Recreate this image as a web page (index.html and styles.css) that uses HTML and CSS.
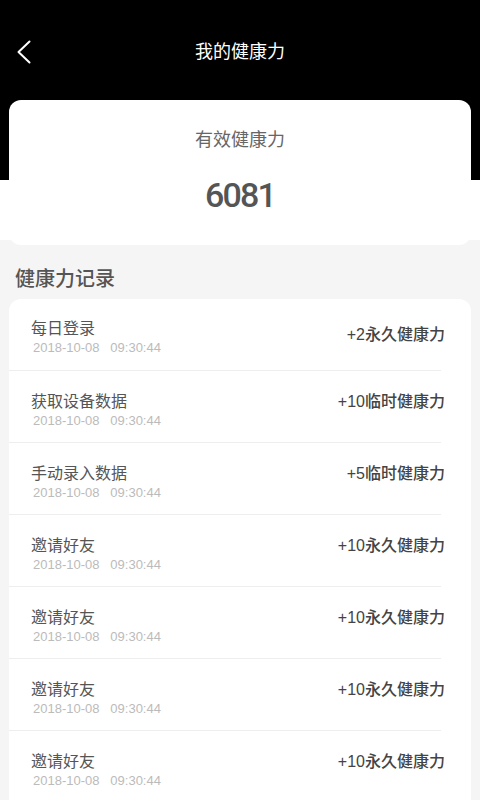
FILE: index.html
```html
<!DOCTYPE html>
<html lang="zh-CN">
<head>
    <meta charset="UTF-8">
    <meta name="viewport" content="width=device-width, initial-scale=1.0">
    <title>我的健康力</title>
    <link rel="stylesheet" href="styles.css">
</head>
<body>
    <div class="hero">
        <div class="nav">
            <span class="back">
                <svg width="14" height="24" viewBox="0 0 14 24">
                    <polyline points="12.5,1.5 1.5,12 12.5,22.5" fill="none" stroke="#fff" stroke-width="2" stroke-linecap="round" stroke-linejoin="round"/>
                </svg>
            </span>
            <span class="nav-title">我的健康力</span>
            <span></span>
        </div>
        <div class="summary">
            <div class="summary-label">有效健康力</div>
            <div class="summary-value">6081</div>
        </div>
    </div>

    <h2 class="section-title">健康力记录</h2>

    <div class="records">
        <div class="record">
            <div class="record-info">
                <div class="record-name">每日登录</div>
                <div class="record-time">2018-10-08&nbsp;&nbsp;&nbsp;09:30:44</div>
            </div>
            <div class="record-points">+2永久健康力</div>
        </div>
        <div class="record">
            <div class="record-info">
                <div class="record-name">获取设备数据</div>
                <div class="record-time">2018-10-08&nbsp;&nbsp;&nbsp;09:30:44</div>
            </div>
            <div class="record-points">+10临时健康力</div>
        </div>
        <div class="record">
            <div class="record-info">
                <div class="record-name">手动录入数据</div>
                <div class="record-time">2018-10-08&nbsp;&nbsp;&nbsp;09:30:44</div>
            </div>
            <div class="record-points">+5临时健康力</div>
        </div>
        <div class="record">
            <div class="record-info">
                <div class="record-name">邀请好友</div>
                <div class="record-time">2018-10-08&nbsp;&nbsp;&nbsp;09:30:44</div>
            </div>
            <div class="record-points">+10永久健康力</div>
        </div>
        <div class="record">
            <div class="record-info">
                <div class="record-name">邀请好友</div>
                <div class="record-time">2018-10-08&nbsp;&nbsp;&nbsp;09:30:44</div>
            </div>
            <div class="record-points">+10永久健康力</div>
        </div>
        <div class="record">
            <div class="record-info">
                <div class="record-name">邀请好友</div>
                <div class="record-time">2018-10-08&nbsp;&nbsp;&nbsp;09:30:44</div>
            </div>
            <div class="record-points">+10永久健康力</div>
        </div>
        <div class="record">
            <div class="record-info">
                <div class="record-name">邀请好友</div>
                <div class="record-time">2018-10-08&nbsp;&nbsp;&nbsp;09:30:44</div>
            </div>
            <div class="record-points">+10永久健康力</div>
        </div>
    </div>
</body>
</html>
```

FILE: styles.css
```css
body {
    margin: 0;
    background: #f5f5f5;
    font-family: "Liberation Sans", "Noto Sans CJK SC", sans-serif;
    color: #555;
}

.hero {
    background: linear-gradient(#000 0, #000 180px, #fff 180px, #fff 240px, transparent 240px);
}

.nav {
    height: 100px;
    display: grid;
    grid-template-columns: 1fr auto 1fr;
    align-items: center;
}

.back {
    padding-left: 17px;
    padding-top: 3px;
    display: flex;
}

.nav-title {
    color: #fff;
    font-size: 18px;
}

.summary {
    margin: 0 9px;
    height: 145px;
    box-sizing: border-box;
    padding-top: 27px;
    background: #fff;
    border-radius: 12px;
    text-align: center;
}

.summary-label {
    font-size: 18px;
    line-height: 26px;
    color: #666;
}

.summary-value {
    margin-top: 21px;
    font-family: Roboto, sans-serif;
    font-size: 34px;
    font-weight: 500;
    line-height: 42px;
    letter-spacing: -1.8px;
    color: #555;
}

.section-title {
    margin: 20px 0 6px 15px;
    font-size: 20px;
    font-weight: 500;
    line-height: 28px;
    color: #555;
}

.records {
    margin: 0 9px;
    background: #fff;
    border-radius: 12px 12px 0 0;
}

.record {
    height: 72px;
    box-sizing: border-box;
    padding: 21px 26px 0 22px;
    display: flex;
    justify-content: space-between;
    align-items: flex-start;
    background: linear-gradient(#eee, #eee) left bottom / calc(100% - 30px) 1px no-repeat;
}

.record:first-child {
    padding-top: 20px;
}

.record-name {
    font-size: 16px;
    line-height: 20px;
    color: #555;
}

.record-time {
    padding-left: 2px;
    font-size: 13px;
    line-height: 18px;
    color: #bbb;
}

.record-points {
    margin-top: -1px;
    font-size: 16px;
    font-weight: 500;
    line-height: 22px;
    color: #444;
}

.record:first-child .record-points {
    margin-top: 5px;
}
```
